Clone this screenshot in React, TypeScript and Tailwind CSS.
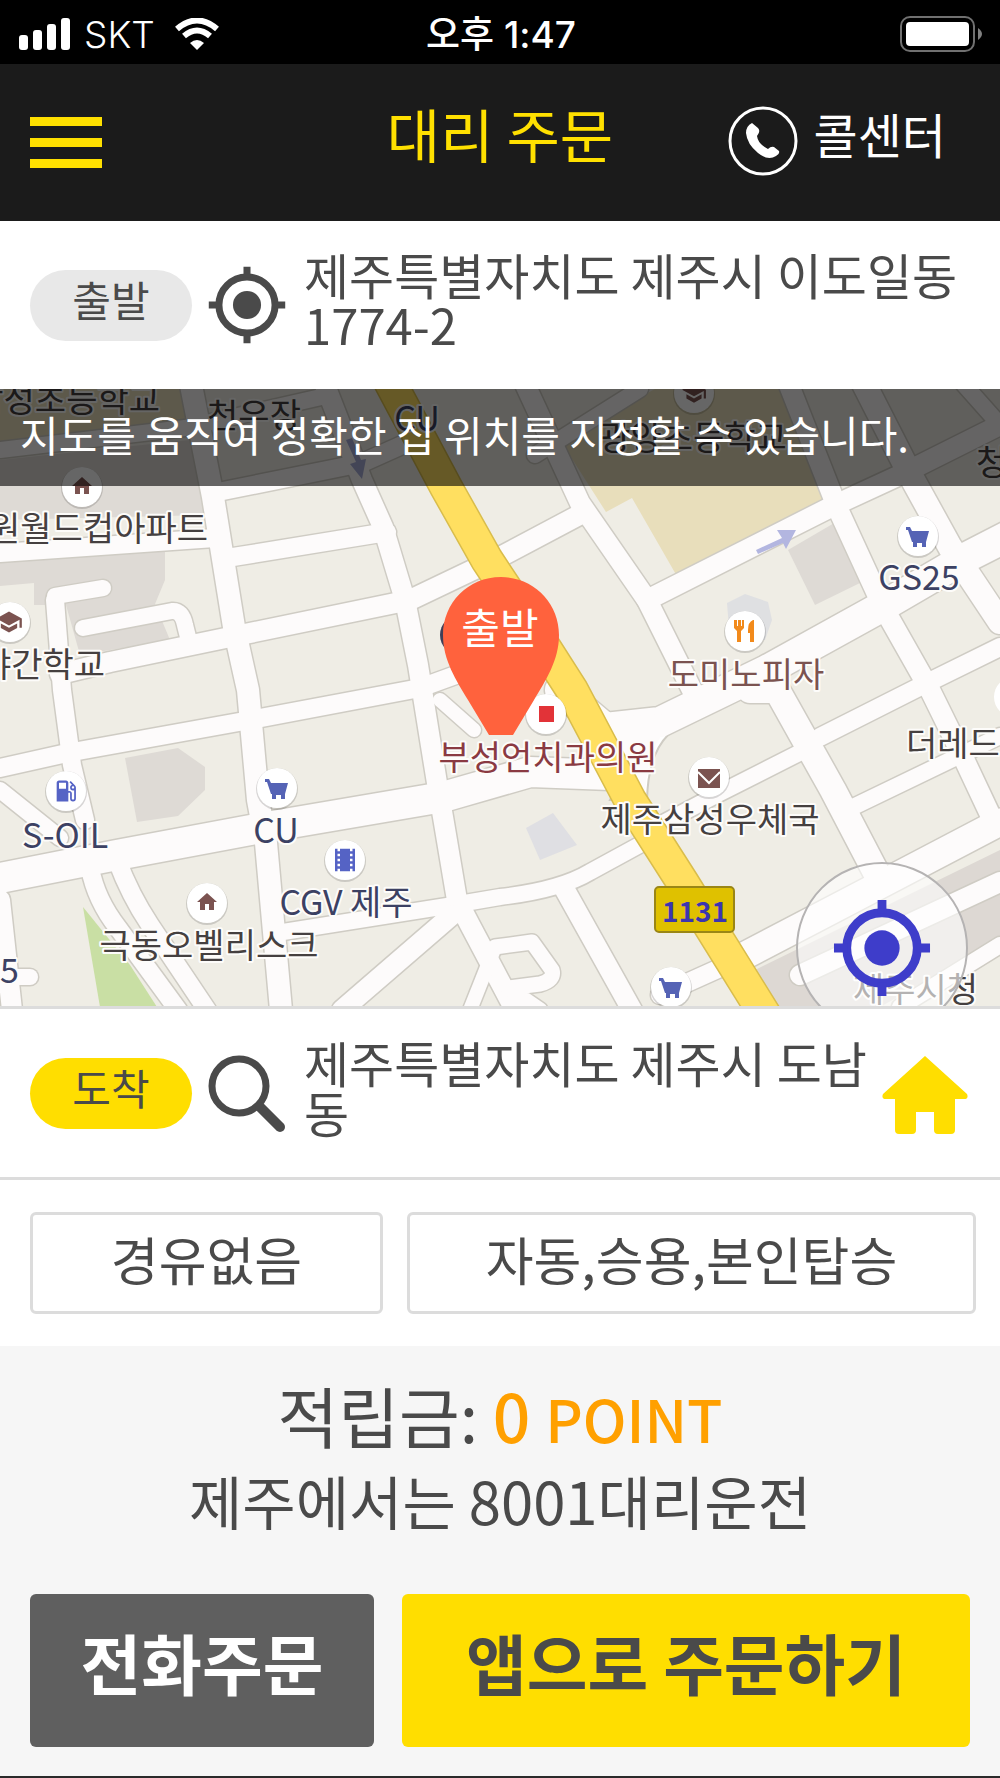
import type { ReactNode, SVGProps } from "react";
import { MdHome, MdLocalGasStation, MdSchool, MdTheaters } from "react-icons/md";

interface Road {
  d: string;
  width: number;
}

interface MapLabel {
  text: string;
  x: number;
  y: number;
  color: string;
  anchor?: "start" | "middle" | "end";
}

const BROWN = "#7b5350";
const NAVY = "#3c4163";
const INK = "#454040";

const roads: Road[] = [
  { d: "M323 380 L362 480 L383 527 L405 600 L418 665 L437 783 L443 817 L457 900 L470 925 L515 1010", width: 20 },
  { d: "M213 493 L362 463 L420 437", width: 18 },
  { d: "M0 553 L215 538", width: 18 },
  { d: "M0 450 L185 428 L330 395", width: 16 },
  { d: "M233 557 L387 532", width: 18 },
  { d: "M60 674 L110 662 L240 635 L410 600 L500 557 L583 513", width: 20 },
  { d: "M0 768 L67 753 L250 720 L420 688 L475 668", width: 18 },
  { d: "M55 600 L62 690 L72 765 L85 820", width: 18 },
  { d: "M103 588 L55 596", width: 16 },
  { d: "M83 628 L172 611 Q182 610 185 625 L190 645", width: 16 },
  { d: "M0 790 L60 838", width: 16 },
  { d: "M0 900 L12 1010", width: 20 },
  { d: "M12 977 L30 977", width: 16 },
  { d: "M90 868 Q96 900 118 928 L178 1010", width: 18 },
  { d: "M117 860 Q130 895 150 925 L207 1010", width: 18 },
  { d: "M283 932 L447 906 L500 897 Q560 890 590 872 L645 842", width: 16 },
  { d: "M452 915 L342 1010", width: 20 },
  { d: "M565 890 L632 1010", width: 20 },
  { d: "M495 947 L532 942 L552 970 Q555 980 540 984 L508 988 L540 1010", width: 15 },
  { d: "M495 947 L470 1010", width: 14 },
  { d: "M440 700 L474 730", width: 14 },
  { d: "M523 380 L580 503 L647 600 L692 690", width: 20 },
  { d: "M535 455 L640 389", width: 16 },
  { d: "M647 600 L835 505 L900 475 L1000 425", width: 20 },
  { d: "M787 380 L837 507 L883 607 L930 690 L963 757 L995 825", width: 20 },
  { d: "M862 380 L913 480 L950 547 L1000 622", width: 24 },
  { d: "M960 380 L1000 425", width: 16 },
  { d: "M820 737 L933 680 L1000 647", width: 18 },
  { d: "M853 807 L967 752 L1000 736", width: 16 },
  { d: "M650 830 L720 793 L805 750", width: 16 },
  { d: "M750 690 L777 690 L833 790 L880 880", width: 26 },
  { d: "M800 975 L1000 882", width: 20 },
  { d: "M900 1007 L1000 945", width: 16 },
  { d: "M660 995 L720 968", width: 18 },
  { d: "M190 380 L213 497 L234 627 L248 690 L258 800 L266 843 L281 1010", width: 22 },
  { d: "M740 958 L853 899 L1000 822", width: 27 },
  { d: "M-10 880 L117 855 L267 827 L443 797 L530 772 L610 775", width: 30 },
  { d: "M560 690 L605 728 L660 722 L767 670 L883 606 L967 557 L1010 535", width: 30 },
];

const yellowRoad = "M389 380 L446 487 L487 560 L540 640 L572 690 L630 800 L683 883 L765 1015";

const labels: MapLabel[] = [
  { text: "삼성초등학교", x: 160, y: 412, color: INK, anchor: "end" },
  { text: "천우장", x: 254, y: 428, color: INK },
  { text: "CU", x: 417, y: 431, color: NAVY },
  { text: "광양초등학교", x: 693, y: 450, color: INK },
  { text: "청", x: 976, y: 475, color: INK, anchor: "start" },
  { text: "원월드컵아파트", x: 208, y: 541, color: INK, anchor: "end" },
  { text: "야간학교", x: 105, y: 677, color: INK, anchor: "end" },
  { text: "GS25", x: 919, y: 590, color: NAVY },
  { text: "도미노피자", x: 746, y: 687, color: BROWN },
  { text: "부성언치과의원", x: 548, y: 770, color: "#8a3a42" },
  { text: "더레드", x: 906, y: 756, color: INK, anchor: "start" },
  { text: "제주삼성우체국", x: 710, y: 832, color: INK },
  { text: "S-OIL", x: 65, y: 848, color: NAVY },
  { text: "CU", x: 276, y: 843, color: NAVY },
  { text: "CGV 제주", x: 346, y: 915, color: NAVY },
  { text: "극동오벨리스크", x: 209, y: 958, color: INK },
  { text: "5", x: 0, y: 983, color: NAVY, anchor: "start" },
  { text: "제주시청", x: 978, y: 1002, color: INK, anchor: "end" },
];

const Crosshair = (props: SVGProps<SVGSVGElement>) => (
  <svg viewBox="0 0 100 100" fill="none" stroke="currentColor" aria-hidden="true" {...props}>
    <circle cx="50" cy="50" r="36" strokeWidth="9" />
    <circle cx="50" cy="50" r="18" fill="currentColor" stroke="none" />
    <path d="M50 1v14M50 85v14M1 50h14M85 50h14" strokeWidth="9" />
  </svg>
);

const Poi = ({ x, y, children }: { x: number; y: number; children?: ReactNode }) => (
  <g transform={`translate(${x} ${y})`}>
    <circle cy="1" r="21" fill="#00000026" />
    <circle r="20" fill="#fff" />
    {children}
  </g>
);

const Cart = () => (
  <g fill="#5563b5">
    <path d="M-12 -9h4l2 4h17l-3 11h-14l-4 -12h-2z" />
    <path d="M-5 5v6h4v-4h5v4h4v-6z" />
  </g>
);

const StreetMap = () => (
  <svg viewBox="0 389 1000 617" className="block h-auto w-full" role="img" aria-label="지도">
    <rect y="389" width="1000" height="618" fill="#efede5" />

    <path d="M0 389H182L188 428L0 450Z" fill="#e8debb" />
    <path d="M0 460L190 440L206 515L0 520Z" fill="#dedad5" />
    <path d="M0 560L165 551V580L155 604L170 640L80 655L66 605H34V583L0 586Z" fill="#dedad5" />
    <path d="M125 758L178 748L205 767V790L178 816L137 822Z" fill="#dedad5" />
    <path d="M560 440L655 389H780L826 505L678 578L632 498L606 512Z" fill="#e8debb" />
    <path d="M788 550L836 522L862 582L815 605Z" fill="#dedad5" />
    <path d="M727 603L745 594L768 602L772 620L765 640H730Z" fill="#dfe0e2" />
    <path d="M526 828L553 813L577 845L540 860Z" fill="#dfdfe3" />
    <path d="M83 907L130 965L157 1007H100Z" fill="#c9dfa4" />
    <path d="M755 970L1000 850V940L880 1007H775Z" fill="#ddd8d3" />

    <g fill="none" stroke="#cfccc4" strokeLinejoin="round" strokeLinecap="round">
      {roads.map((road) => (
        <path key={road.d} d={road.d} strokeWidth={road.width + 3} />
      ))}
    </g>
    <path d="M655 715L690 715L668 735Q648 755 647 800L610 800Z" fill="#fff" stroke="#cfccc4" strokeWidth="2" />
    <g fill="none" stroke="#fdfbfb" strokeLinejoin="round" strokeLinecap="round">
      {roads.map((road) => (
        <path key={road.d} d={road.d} strokeWidth={road.width} />
      ))}
    </g>
    <path d="M595 718L665 714L660 738Q646 755 645 798L610 790Z" fill="#fdfbfb" />
    <path d={yellowRoad} fill="none" stroke="#d9bd4c" strokeWidth="34" />
    <path d={yellowRoad} fill="none" stroke="#ffdf60" strokeWidth="31" />

    <path d="M756 550L782 538L777 530L796 530L786 549L783 543L758 554Z" fill="#b3b6e0" />
    <path d="M346 440L356 462L350 464L362 479L366 459L361 460L352 438Z" fill="#a9add8" />

    <rect x="655" y="887" width="79" height="45" rx="4" fill="#dfc100" stroke="#9a8616" strokeWidth="2" />
    <text x="695" y="922" textAnchor="middle" fill="#3b35b0" className="text-[28px] font-bold">
      1131
    </text>

    <Poi x={694} y={393}>
      <MdSchool x={-13} y={-13} size={26} color={BROWN} />
    </Poi>
    <Poi x={82} y={487}>
      <MdHome x={-12} y={-13} size={24} color={BROWN} />
    </Poi>
    <Poi x={10} y={622}>
      <MdSchool x={-15} y={-14} size={28} color={BROWN} />
    </Poi>
    <Poi x={66} y={791}>
      <MdLocalGasStation x={-14} y={-14} size={28} color="#5563c5" />
    </Poi>
    <Poi x={277} y={788}>
      <Cart />
    </Poi>
    <Poi x={345} y={860}>
      <MdTheaters x={-15} y={-15} size={30} color="#5563c5" />
    </Poi>
    <Poi x={207} y={903}>
      <MdHome x={-12} y={-13} size={24} color={BROWN} />
    </Poi>
    <Poi x={918} y={536}>
      <Cart />
    </Poi>
    <Poi x={745} y={631}>
      <g fill="#f28a1b">
        <path d="M-11 -11h3v6h1v-6h3v6h1v-6h2v8l-3 3v11h-4v-11l-3 -3z" />
        <path d="M8 -11q-5 2 -5 10v3h2v9h4v-22z" />
      </g>
    </Poi>
    <Poi x={546} y={714}>
      <rect x="-7" y="-8" width="15" height="16" fill="#e23338" />
    </Poi>
    <Poi x={709} y={777}>
      <rect x="-11" y="-8" width="22" height="19" fill={BROWN} />
      <path d="M-11 -5L0 6L11 -5" fill="none" stroke="#fff" strokeWidth="2" />
    </Poi>
    <Poi x={671} y={987}>
      <Cart />
    </Poi>
    <circle cx="1014" cy="697" r="20" fill="#fff" />
    <circle cx="460" cy="635" r="20" fill="#3f3f58" />

    {labels.map((label) => (
      <text
        key={`${label.text}-${label.x}`}
        x={label.x}
        y={label.y}
        textAnchor={label.anchor ?? "middle"}
        fill={label.color}
        stroke="#fdfcfa"
        strokeWidth="4"
        strokeLinejoin="round"
        paintOrder="stroke"
        className="text-[34px]"
      >
        {label.text}
      </text>
    ))}

    <path
      d="M501 577C534 577 559 603 559 635C559 660 546 680 534 700L513 735H489L468 700C456 680 443 660 443 635C443 603 468 577 501 577Z"
      fill="#ff623d"
    />
    <text x="500" y="644" textAnchor="middle" fill="#fff" className="text-[42px]">
      출발
    </text>
  </svg>
);

const StatusBar = () => (
  <div className="grid h-16 grid-cols-3 items-center bg-black pt-1 pr-4 pl-[18px] text-white">
    <div className="flex items-center gap-3">
      <svg viewBox="0 0 54 32" className="h-8 w-[54px]" fill="currentColor" aria-hidden="true">
        <rect x="1" y="17" width="9" height="15" rx="3" />
        <rect x="15" y="12" width="9" height="20" rx="3" />
        <rect x="29" y="6" width="9" height="26" rx="3" />
        <rect x="43" y="0" width="9" height="32" rx="3" />
      </svg>
      <span className="font-[Inter] text-[37px] leading-none font-light">SKT</span>
      <svg viewBox="0 0 44 32" className="ml-2 h-8 w-11" fill="none" stroke="currentColor" aria-hidden="true">
        <path d="M2 11Q22 -6 42 11" strokeWidth="6" />
        <path d="M9 18Q22 7 35 18" strokeWidth="6" />
        <path d="M22 32L15 25Q22 19 29 25Z" fill="currentColor" stroke="none" />
      </svg>
    </div>
    <span className="text-center font-[Inter,'Noto_Sans_CJK_KR',sans-serif] text-[37px] leading-none font-medium">
      오후 1:47
    </span>
    <svg viewBox="0 0 84 36" className="h-9 w-[84px] justify-self-end" fill="none" aria-hidden="true">
      <rect x="1" y="1" width="73" height="34" rx="9" stroke="#707070" strokeWidth="2" />
      <rect x="6" y="6" width="63" height="24" rx="4" fill="#fff" />
      <path d="M78 12Q86 18 78 24Z" fill="#808080" />
    </svg>
  </div>
);

const Header = () => (
  <header className="grid h-[157px] grid-cols-[1fr_auto_1fr] items-center bg-[#1b1b1b] px-[30px]">
    <button type="button" aria-label="메뉴" className="flex w-[72px] flex-col gap-3">
      <span className="h-[9px] bg-[#ffe000]" />
      <span className="h-[9px] bg-[#ffe000]" />
      <span className="h-[9px] bg-[#ffe000]" />
    </button>
    <h1 className="pb-5 text-[58px] leading-none text-[#ffe000]">대리 주문</h1>
    <a href="tel:8001" className="mr-6 flex items-center gap-4 justify-self-end pb-1 text-white">
      <svg viewBox="0 0 70 70" className="size-[70px]" fill="none" aria-hidden="true">
        <circle cx="35" cy="35" r="33" stroke="currentColor" strokeWidth="3" />
        <path
          d="M24 17L30 22Q33 25 29 30Q30 38 40 43Q43 40 46 41L51 45Q52 48 48 50Q40 55 30 47Q19 38 18 27Q18 20 24 17Z"
          fill="currentColor"
        />
      </svg>
      <span className="pb-4 text-[48px] leading-none">콜센터</span>
    </a>
  </header>
);

export default function App() {
  return (
    <div className="flex min-h-screen flex-col bg-white font-['Noto_Sans_CJK_KR',sans-serif] text-[#4a4a4a]">
      <StatusBar />
      <Header />

      <section className="flex h-[168px] items-center px-[30px]">
        <span className="flex h-[71px] w-[162px] shrink-0 items-center justify-center rounded-full bg-[#e8e8e8] pb-3 text-[42px] leading-none">
          출발
        </span>
        <button type="button" aria-label="현재 위치" className="mx-4 shrink-0">
          <Crosshair className="size-[78px]" />
        </button>
        <p className="grow pb-3 pl-[2px] text-[49px] leading-[50px]">
          제주특별자치도 제주시 이도일동
          <br />
          1774-2
        </p>
      </section>

      <section className="relative overflow-hidden">
        <StreetMap />
        <p className="absolute inset-x-0 top-0 flex h-[97px] items-center bg-black/60 px-5 pb-2 text-[42px] leading-none text-white">
          지도를 움직여 정확한 집 위치를 지정할 수 있습니다.
        </p>
        <button
          type="button"
          aria-label="내 위치로 이동"
          className="absolute right-8 -bottom-7 flex size-43 items-center justify-center rounded-full border-2 border-[#b5b3b3] bg-white/60 text-[#3e3dca]"
        >
          <Crosshair className="size-[98px]" />
        </button>
      </section>

      <section className="flex h-[174px] items-center border-y-3 border-[#dcdcdc] px-[30px]">
        <span className="flex h-[71px] w-[162px] shrink-0 items-center justify-center rounded-full bg-[#ffde00] pb-3 text-[42px] leading-none">
          도착
        </span>
        <button type="button" aria-label="도착지 검색" className="mx-4 shrink-0">
          <svg viewBox="0 0 78 78" className="size-[78px]" fill="none" stroke="currentColor" aria-hidden="true">
            <circle cx="31" cy="32" r="27" strokeWidth="7" />
            <path d="M52 53L72 73" strokeWidth="10" strokeLinecap="round" />
          </svg>
        </button>
        <p className="grow pb-3 pl-[2px] text-[49px] leading-[50px]">제주특별자치도 제주시 도남동</p>
        <button type="button" aria-label="집" className="mr-[2px] shrink-0 pt-1 text-[#ffde00]">
          <svg viewBox="0 0 86 80" className="h-20 w-[86px]" fill="currentColor" aria-hidden="true">
            <path d="M43 1L85 39Q87 44 82 44H73V75Q73 79 69 79H56Q52 79 52 75V57H34V75Q34 79 30 79H17Q13 79 13 75V44H4Q-1 44 1 39Z" />
          </svg>
        </button>
      </section>

      <section className="flex gap-6 py-8 pr-6 pl-[30px]">
        <button
          type="button"
          className="h-[102px] w-[353px] shrink-0 rounded-md border-3 border-[#dcdcdc] pb-2 text-[52px] leading-none"
        >
          경유없음
        </button>
        <button
          type="button"
          className="h-[102px] grow rounded-md border-3 border-[#dcdcdc] pb-2 text-[52px] leading-none"
        >
          자동,승용,본인탑승
        </button>
      </section>

      <footer className="flex grow flex-col border-b-2 border-[#2a2a2a] bg-[#f6f6f6] px-[30px] pt-7">
        <p className="text-center text-[66px] leading-[80px]">
          적립금: <span className="font-medium text-[#ffa000]">0 <span className="text-[58px]">POINT</span></span>
        </p>
        <p className="text-center text-[58px] leading-[84px]">제주에서는 8001대리운전</p>
        <div className="mt-[52px] flex gap-7">
          <button
            type="button"
            className="h-[153px] w-[344px] shrink-0 rounded-md bg-[#5f5f5f] pb-5 text-[66px] leading-none font-bold text-white"
          >
            전화주문
          </button>
          <button
            type="button"
            className="h-[153px] grow rounded-md bg-[#ffde00] pb-5 text-[66px] leading-none font-bold"
          >
            앱으로 주문하기
          </button>
        </div>
      </footer>
    </div>
  );
}
